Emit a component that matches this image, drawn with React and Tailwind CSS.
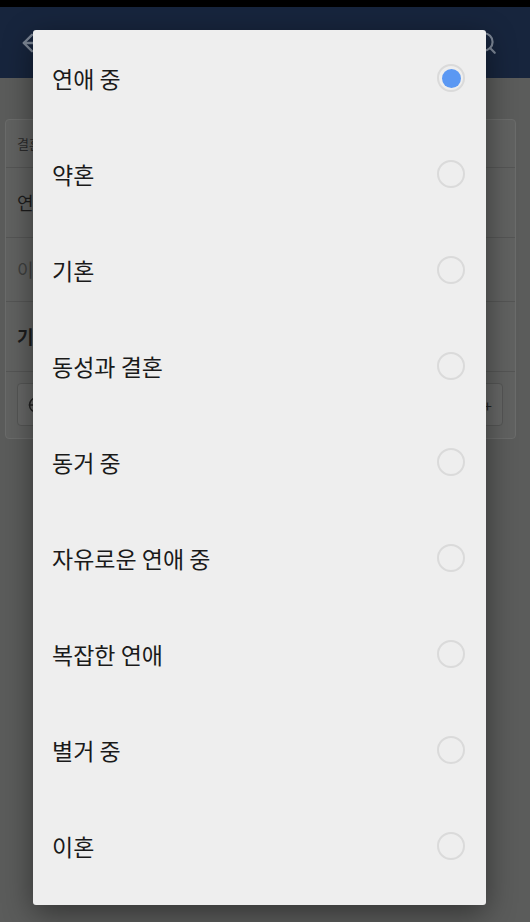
import React, { useState } from 'react';
import { ArrowLeft, Search, Globe } from 'lucide-react';

const options = [
  '연애 중',
  '약혼',
  '기혼',
  '동성과 결혼',
  '동거 중',
  '자유로운 연애 중',
  '복잡한 연애',
  '별거 중',
  '이혼',
];

const font = { fontFamily: '"Noto Sans CJK KR", "Noto Sans", Roboto, sans-serif' };

const Radio = ({ checked }) => (
  <span className="flex h-[28px] w-[28px] items-center justify-center rounded-full border-2 border-[#dadada]">
    {checked && <span className="h-[19px] w-[19px] rounded-full bg-[#5b98f3]" />}
  </span>
);

const App = () => {
  const [selected, setSelected] = useState(0);

  return (
    <div className="relative h-[922px] w-[530px] overflow-hidden bg-[#5b5c5b]" style={font}>
      <div className="h-[7px] bg-black" />
      <header className="flex h-[71px] items-center justify-between bg-[#17253d] pl-[18px] pr-[32px] text-[#7d8796]">
        <ArrowLeft size={28} strokeWidth={2} />
        <Search size={26} strokeWidth={2} />
      </header>

      {/* page under the dialog */}
      <div className="pl-[5px] pr-[14px] pt-[41px]">
        <div className="rounded-[4px] border border-[#6b6c6b] bg-[#616261] text-[#1c1c1c]">
          <div className="flex h-[48px] items-center border-b border-[#555655] px-[11px] text-[13px] text-[#2b2b2b]">
            결혼
          </div>
          <div className="flex h-[70px] items-center border-b border-[#555655] px-[11px] text-[18px]">
            연애
          </div>
          <div className="flex h-[64px] items-center border-b border-[#555655] px-[11px] text-[18px] text-[#3e3f3e]">
            이
          </div>
          <div className="flex h-[70px] items-center border-b border-[#555655] px-[11px] text-[18px] font-bold">
            기간
          </div>
          <div className="pl-[11px] pr-[12px] pt-[11px] pb-[12px]">
            <div className="flex h-[43px] items-center justify-between rounded-[4px] border border-[#555655] bg-[#666766] px-[10px] text-[#222]">
              <Globe size={18} />
              <span className="text-[16px]">+</span>
            </div>
          </div>
        </div>
      </div>

      {/* dialog */}
      <div className="absolute left-[33px] top-[30px] w-[453px] rounded-[3px] bg-[#eeeeee] pb-[11px] shadow-[0_8px_30px_rgba(0,0,0,0.45)]">
        {options.map((label, i) => (
          <button
            key={label}
            onClick={() => setSelected(i)}
            className="flex h-[96px] w-full items-center justify-between pl-[19px] pr-[21px] text-left"
          >
            <span className="text-[23px] text-[#1a1a1a]">{label}</span>
            <Radio checked={selected === i} />
          </button>
        ))}
      </div>
    </div>
  );
};

export default App;
